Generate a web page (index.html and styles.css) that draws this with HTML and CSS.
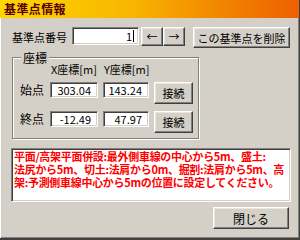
FILE: index.html
```html
<!DOCTYPE html>
<html lang="ja">
  <head>
    <meta charset="UTF-8" />
    <title>基準点情報</title>
    <link rel="stylesheet" href="styles.css">
  </head>
  <body>
    <div class="window">
      <div class="titlebar">基準点情報</div>
      <div class="content">
        <div class="toprow">
          <span class="label">基準点番号</span>
          <div class="field point-no"><span>1</span><span class="caret"></span></div>
          <div class="arrows">
            <button class="button arrow">←</button>
            <button class="button arrow">→</button>
          </div>
          <button class="button delete">この基準点を削除</button>
        </div>

        <div class="group">
          <span class="group-title">座標</span>
          <div class="coords">
            <span></span>
            <span class="head">X座標[m]</span>
            <span class="head">Y座標[m]</span>
            <span></span>

            <span class="label row-label">始点</span>
            <div class="field num">303.04</div>
            <div class="field num">143.24</div>
            <button class="button connect">接続</button>

            <span class="label row-label">終点</span>
            <div class="field num">-12.49</div>
            <div class="field num">47.97</div>
            <button class="button connect">接続</button>
          </div>
        </div>

        <div class="note">平面/高架平面併設:最外側車線の中心から5m、盛土:<br>法尻から5m、切土:法肩から0m、掘割:法肩から5m、高<br>架:予測側車線中心から5mの位置に設定してください。</div>

        <div class="footer">
          <button class="button close">閉じる</button>
        </div>
      </div>
    </div>
  </body>
</html>
```

FILE: styles.css
```css
* {
  margin: 0;
  padding: 0;
  box-sizing: border-box;
}
html,
body {
  width: 300px;
  height: 240px;
  overflow: hidden;
  background: #d4d0c8;
  font-family: "Noto Sans CJK JP", "Noto Sans", sans-serif;
  font-size: 11px;
  color: #000;
}
.window {
  width: 300px;
  height: 240px;
  display: flex;
  flex-direction: column;
  border-right: 1px solid #404040;
  border-bottom: 2px solid #404040;
  box-shadow: inset -1px -1px 0 #808080;
}
/* タイトルバー */
.titlebar {
  height: 18px;
  flex: 0 0 18px;
  padding-left: 4px;
  line-height: 18px;
  font-size: 12px;
  font-weight: 700;
  letter-spacing: 0.4px;
  color: #5a0000;
  background: linear-gradient(to right, #fcd800 0%, #f8b400 45%, #f07c00 80%, #ee6000 100%);
}
.content {
  flex: 1;
  padding: 9px 0 0 0;
  border-left: 1px solid #fff;
}
.label {
  line-height: 16px;
  white-space: nowrap;
}
/* 共通部品 */
.button {
  font-family: inherit;
  font-size: 11px;
  color: #000;
  background: #d4d0c8;
  border: 1px solid;
  border-color: #fff #404040 #404040 #fff;
  box-shadow: inset -1px -1px 0 #808080, inset 1px 1px 0 #e8e6e0;
  cursor: pointer;
}
.field {
  height: 16px;
  background: #fff;
  border: 1px solid;
  border-color: #808080 #fff #fff #808080;
  box-shadow: inset 1px 1px 0 #404040, inset -1px -1px 0 #d4d0c8;
  line-height: 14px;
}
.num {
  text-align: right;
  padding-right: 6px;
}
/* 1行目 */
.toprow {
  display: flex;
  align-items: flex-start;
  padding-left: 11px;
}
.toprow .label {
  margin-top: 2px;
  width: 60px;
}
.point-no {
  width: 67px;
  height: 18px;
  display: flex;
  justify-content: flex-end;
  align-items: center;
  padding-right: 4px;
  line-height: 14px;
}
.caret {
  width: 1px;
  height: 12px;
  margin-left: 1px;
  background: #000;
}
.arrows {
  display: flex;
  margin-left: 2px;
}
.arrow {
  width: 22px;
  height: 19px;
  font-size: 11px;
  line-height: 15px;
}
.delete {
  margin-left: 8px;
  width: 97px;
  height: 21px;
}
/* 座標グループ */
.group {
  margin: 9px 0 0 11px;
  width: 187px;
  height: 82px;
  border: 1px solid #808080;
  box-shadow: 1px 1px 0 #fff, inset 1px 1px 0 #fff;
}
.group-title {
  display: block;
  width: max-content;
  margin: -7px 0 0 8px;
  padding: 0 2px;
  background: #d4d0c8;
  line-height: 13px;
  font-size: 12px;
}
.coords {
  display: grid;
  grid-template-columns: 25px 48px 46px 39px;
  grid-template-rows: 12px 22px 22px;
  column-gap: 5px;
  row-gap: 7px;
  align-items: start;
  padding-left: 7px;
  margin-top: -1px;
}
.head {
  line-height: 12px;
  white-space: nowrap;
  padding-left: 1px;
}
.row-label {
  font-size: 12px;
  line-height: 16px;
}
.connect {
  height: 22px;
  width: 39px;
}
/* 注意書き */
.note {
  margin: 9px 0 0 10px;
  width: 280px;
  height: 54px;
  padding: 1px 0 0 2px;
  background: #fff;
  border: 1px solid;
  border-color: #808080 #fff #fff #808080;
  box-shadow: inset 1px 1px 0 #404040, inset -1px -1px 0 #d4d0c8;
  color: #ff0000;
  font-weight: 700;
  font-size: 11px;
  letter-spacing: -0.3px;
  line-height: 13px;
  white-space: nowrap;
  overflow: hidden;
}
.footer {
  display: flex;
  justify-content: flex-end;
  padding: 5px 10px 0 0;
}
.close {
  width: 76px;
  height: 22px;
  font-size: 12px;
}
```
